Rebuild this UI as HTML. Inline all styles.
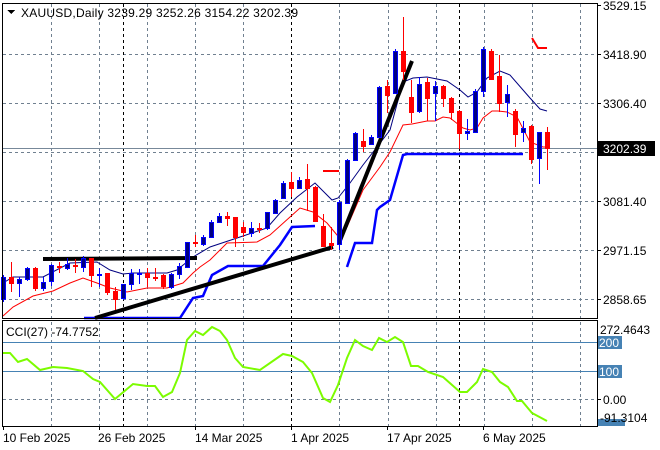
<!DOCTYPE html>
<html><head><meta charset="utf-8"><style>
html,body{margin:0;padding:0;background:#fff;}
svg{display:block;}
text{font-family:"Liberation Sans","DejaVu Sans",sans-serif;font-size:12px;fill:#000;}
</style></head><body>
<svg width="660" height="450" viewBox="0 0 660 450" xmlns="http://www.w3.org/2000/svg" shape-rendering="crispEdges">
<rect width="660" height="450" fill="#fff"/>
<g stroke="#708090" stroke-width="1" stroke-dasharray="3,3" fill="none">
<path d="M3 54.5H597M3 103.5H597M3 152.5H597M3 201.5H597M3 250.5H597M3 299.5H597"/>
<path d="M51.5 4V318M99.5 4V318M147.5 4V318M195.5 4V318M243.5 4V318M339.5 4V318M388.5 4V318M436.5 4V318M484.5 4V318M532.5 4V318M580.5 4V318"/>
<path d="M51.5 322V426M99.5 322V426M147.5 322V426M195.5 322V426M243.5 322V426M339.5 322V426M388.5 322V426M436.5 322V426M484.5 322V426M532.5 322V426M580.5 322V426"/>
<path d="M3 399.5H597"/>
</g>
<g stroke="#000" stroke-width="1" stroke-dasharray="3,3" fill="none">
<path d="M123.5 4V318M291.5 4V318M459.5 4V318M123.5 322V426M291.5 322V426M459.5 322V426"/>
</g>
<path d="M3 148.5H597" stroke="#778899" stroke-width="1"/>
<path d="M3 342.5H597M3 371.5H597" stroke="#4682b4" stroke-width="1"/>
<g fill="none" stroke-width="1" shape-rendering="auto">
<polyline stroke="#000080" points="3,283 13,277 43,277 70,263 97,262 110,270 123,274 133,273 167,273 177,270 193,257 210,247 240,237 267,228 280,213 297,197 315,183 332,200 338,198 350,183 363,165 377,147 390,130 403,82 413,78 427,77 447,81 460,90 468,97 477,92 487,78 500,71 510,75 530,98 540,109 547,111"/>
<polyline stroke="#ff0000" points="3,316 13,307 33,296 53,291 70,283 83,278 97,283 110,288 127,292 147,288 167,288 183,283 193,273 200,267 210,260 227,243 257,242 270,235 290,217 300,208 313,212 327,223 337,235 347,227 363,190 380,167 390,152 403,125 412,124 427,121 435,121 443,117 450,118 463,128 470,130 477,128 483,118 492,111 498,111 507,112 517,117 530,142 543,147 547,147"/>
</g>
<g fill="none" stroke="#0000ff" stroke-width="2.5" shape-rendering="auto">
<polyline points="84,318 180,318 193,298 203,296 212,275 228,266 263,266 280,245 292,227 315,226"/>
<polyline points="347,267 355,243 372,243 377,210 380,207 390,200 403,155 407,154 523,154"/>
</g>
<g fill="none" stroke="#ff0000" stroke-width="2">
<path d="M323 171H339"/>
<path d="M532 38L538 48H547" shape-rendering="auto"/>
</g>
<g stroke="#000" stroke-width="4" fill="none" shape-rendering="auto">
<line x1="43" y1="259" x2="197" y2="258"/>
<line x1="95" y1="318" x2="333" y2="247"/>
<line x1="339" y1="243" x2="412" y2="61"/>
</g>
<g stroke-width="1">
<g stroke="#0000ff" fill="#000080">
<path d="M3.5 275V302M19.5 277V297M27.5 267V281M43.5 277V291M51.5 264V286M67.5 258V270M83.5 256V272M99.5 268V287M123.5 284V300M131.5 269V290M139.5 269V284M171.5 273V289M179.5 263V279M187.5 242V267M203.5 235V246M211.5 220V238M219.5 213V223M251.5 222V237M267.5 212V230M275.5 199V213M283.5 181V199M299.5 177V188M339.5 200V250M347.5 159V203M355.5 132V161M371.5 135V145M379.5 86V137M395.5 49V93M419.5 77V113M435.5 81V121M467.5 119V140M475.5 89V133M483.5 47V97M507.5 85V117M523.5 121V142M539.5 132V184" fill="none"/>
<rect x="1.5" y="277.5" width="4" height="22"/>
<rect x="17.5" y="279.5" width="4" height="4"/>
<rect x="25.5" y="268.5" width="4" height="11"/>
<rect x="41.5" y="282.5" width="4" height="6"/>
<rect x="49.5" y="265.5" width="4" height="16"/>
<rect x="65.5" y="264.5" width="4" height="4"/>
<rect x="81.5" y="258.5" width="4" height="9"/>
<rect x="97.5" y="274.5" width="4" height="1"/>
<rect x="121.5" y="284.5" width="4" height="14"/>
<rect x="129.5" y="273.5" width="4" height="11"/>
<rect x="137.5" y="273.5" width="4" height="1"/>
<rect x="169.5" y="274.5" width="4" height="13"/>
<rect x="177.5" y="266.5" width="4" height="8"/>
<rect x="185.5" y="242.5" width="4" height="25"/>
<rect x="201.5" y="237.5" width="4" height="7"/>
<rect x="209.5" y="222.5" width="4" height="15"/>
<rect x="217.5" y="216.5" width="4" height="6"/>
<rect x="249.5" y="228.5" width="4" height="5"/>
<rect x="265.5" y="212.5" width="4" height="16"/>
<rect x="273.5" y="200.5" width="4" height="13"/>
<rect x="281.5" y="183.5" width="4" height="15"/>
<rect x="297.5" y="180.5" width="4" height="8"/>
<rect x="337.5" y="202.5" width="4" height="42"/>
<rect x="345.5" y="160.5" width="4" height="43"/>
<rect x="353.5" y="133.5" width="4" height="27"/>
<rect x="369.5" y="137.5" width="4" height="7"/>
<rect x="377.5" y="87.5" width="4" height="50"/>
<rect x="393.5" y="51.5" width="4" height="42"/>
<rect x="417.5" y="84.5" width="4" height="27"/>
<rect x="433.5" y="86.5" width="4" height="7"/>
<rect x="465.5" y="131.5" width="4" height="2"/>
<rect x="473.5" y="91.5" width="4" height="41"/>
<rect x="481.5" y="49.5" width="4" height="42"/>
<rect x="505.5" y="94.5" width="4" height="8"/>
<rect x="521.5" y="128.5" width="4" height="4"/>
<rect x="537.5" y="132.5" width="4" height="26"/>
</g>
<g stroke="#ff0000" fill="#ff0000">
<path d="M11.5 262V292M35.5 267V291M59.5 262V273M75.5 259V273M91.5 258V287M107.5 273V295M115.5 287V310M147.5 268V287M155.5 268V281M163.5 274V289M195.5 235V247M227.5 212V226M235.5 217V247M243.5 222V237M259.5 223V233M291.5 172V197M307.5 164V211M315.5 186V222M323.5 214V247M331.5 227V250M363.5 129V152M387.5 80V113M403.5 17V80M411.5 80V123M427.5 78V121M443.5 85V107M451.5 97V120M459.5 110V149M491.5 49V80M499.5 55V112M515.5 109V147M531.5 125V164M547.5 127V170" fill="none"/>
<rect x="9.5" y="277.5" width="4" height="6"/>
<rect x="33.5" y="268.5" width="4" height="20"/>
<rect x="57.5" y="266.5" width="4" height="1"/>
<rect x="73.5" y="265.5" width="4" height="1"/>
<rect x="89.5" y="258.5" width="4" height="17"/>
<rect x="105.5" y="273.5" width="4" height="19"/>
<rect x="113.5" y="291.5" width="4" height="8"/>
<rect x="145.5" y="273.5" width="4" height="4"/>
<rect x="153.5" y="277.5" width="4" height="1"/>
<rect x="161.5" y="275.5" width="4" height="11"/>
<rect x="193.5" y="242.5" width="4" height="1"/>
<rect x="225.5" y="216.5" width="4" height="2"/>
<rect x="233.5" y="217.5" width="4" height="20"/>
<rect x="241.5" y="227.5" width="4" height="5"/>
<rect x="257.5" y="228.5" width="4" height="1"/>
<rect x="289.5" y="182.5" width="4" height="6"/>
<rect x="305.5" y="179.5" width="4" height="9"/>
<rect x="313.5" y="187.5" width="4" height="34"/>
<rect x="321.5" y="226.5" width="4" height="20"/>
<rect x="329.5" y="243.5" width="4" height="2"/>
<rect x="361.5" y="141.5" width="4" height="5"/>
<rect x="385.5" y="86.5" width="4" height="9"/>
<rect x="401.5" y="51.5" width="4" height="20"/>
<rect x="409.5" y="97.5" width="4" height="15"/>
<rect x="425.5" y="82.5" width="4" height="16"/>
<rect x="441.5" y="86.5" width="4" height="12"/>
<rect x="449.5" y="98.5" width="4" height="14"/>
<rect x="457.5" y="111.5" width="4" height="22"/>
<rect x="489.5" y="51.5" width="4" height="28"/>
<rect x="497.5" y="76.5" width="4" height="27"/>
<rect x="513.5" y="111.5" width="4" height="23"/>
<rect x="529.5" y="126.5" width="4" height="33"/>
<rect x="545.5" y="132.5" width="4" height="16"/>
</g>
</g>
<polyline fill="none" stroke="#7cfc00" stroke-width="2" shape-rendering="auto" points="3,353 10,353 18,362 27,359 40,370 53,367 67,368 83,371 93,379 100,382 115,399 133,384 147,386 155,386 163,397 172,392 180,373 187,340 195,331 203,335 212,327 220,331 227,340 235,358 243,367 260,370 283,354 292,356 303,362 312,373 323,398 330,402 338,385 347,358 355,340 363,346 372,350 379,338 387,342 395,337 403,342 411,366 418,366 428,372 443,377 460,392 467,392 477,382 483,369 492,372 500,382 508,387 517,401 522,401 532,413 547,421"/>
<g fill="none" stroke="#000" stroke-width="1">
<rect x="2.5" y="3.5" width="595" height="315"/>
<rect x="2.5" y="320.5" width="595" height="106"/>
</g>
<g stroke="#000" stroke-width="1">
<path d="M597 5.5h4M597 54.5h4M597 103.5h4M597 201.5h4M597 250.5h4M597 299.5h4M597 399.5h4M3.5 426v4M99.5 426v4M195.5 426v4M291.5 426v4M387.5 426v4M483.5 426v4"/>
</g>
<path d="M7 10h8l-4 4z" fill="#000"/>
<text x="21" y="17" textLength="277">XAUUSD,Daily  3239.29 3252.26 3154.22 3202.39</text>
<text x="6" y="336">CCI(27) -74.7752</text>
<text x="603" y="10">3529.15</text>
<text x="603" y="59">3418.90</text>
<text x="603" y="108">3306.40</text>
<text x="603" y="206">3081.40</text>
<text x="603" y="255">2971.15</text>
<text x="603" y="304">2858.65</text>
<rect x="598" y="141" width="57" height="15" fill="#000"/>
<text x="603" y="153" style="fill:#fff">3202.39</text>
<text x="600" y="334">272.4643</text>
<rect x="598" y="336" width="24" height="13" fill="#4682b4"/>
<text x="599" y="347" style="fill:#fff">200</text>
<rect x="598" y="365" width="24" height="13" fill="#4682b4"/>
<text x="599" y="376" style="fill:#fff">100</text>
<text x="603" y="404">0.00</text>
<rect x="598" y="419" width="27" height="7" fill="#4682b4"/>
<text x="600" y="422">-91.3104</text>
<text x="3" y="442">10 Feb 2025</text>
<text x="98" y="442">26 Feb 2025</text>
<text x="195" y="442">14 Mar 2025</text>
<text x="291" y="442">1 Apr 2025</text>
<text x="387" y="442">17 Apr 2025</text>
<text x="483" y="442">6 May 2025</text>
</svg>
</body></html>
